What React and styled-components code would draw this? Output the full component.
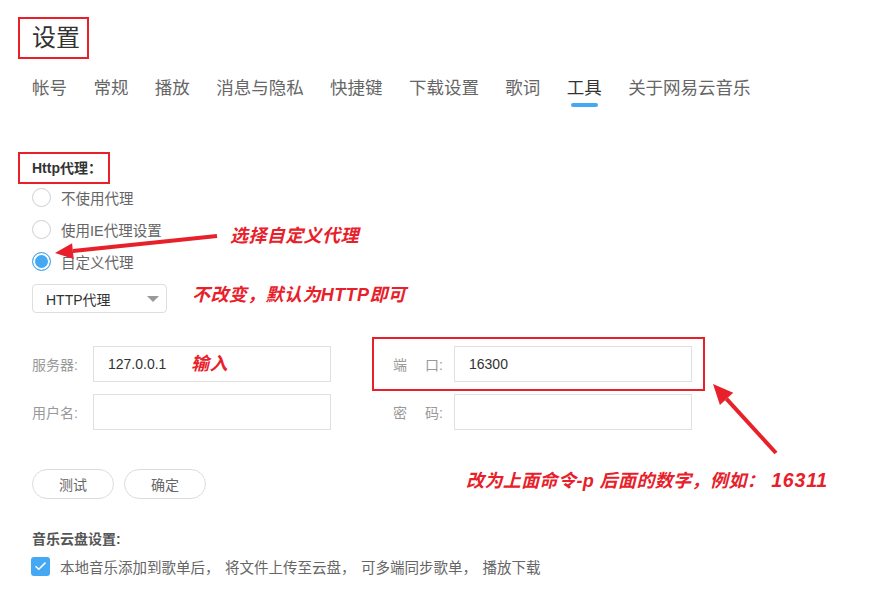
import React from "react";
import styled, { createGlobalStyle } from "styled-components";

const RED = "#e8202a";
const BLUE = "#44a8f2";

const GlobalStyle = createGlobalStyle`
  html, body {
    margin: 0;
    padding: 0;
    background: #fff;
  }
  body {
    font-family: "Liberation Sans", "Noto Sans CJK SC", sans-serif;
  }
`;

const Page = styled.div`
  position: relative;
  width: 889px;
  height: 602px;
  overflow: hidden;
  box-sizing: border-box;
  padding: 17px 0 0 32px;
  background: #fff;
`;

// 红框标注（标题、Http代理）
const Boxed = styled.div`
  box-sizing: border-box;
  width: ${p => p.$w}px;
  height: ${p => p.$h}px;
  margin-left: -14px;
  padding-left: 12px;
  border: 2px solid ${RED};
  color: #333;
  font-size: ${p => p.$size}px;
  font-weight: ${p => (p.$bold ? 700 : 400)};
  line-height: ${p => p.$h - 4}px;
`;

const Tabs = styled.div`
  display: flex;
  gap: 26.4px;
  margin-top: 17px;
`;

const Tab = styled.div`
  position: relative;
  padding-bottom: 7px;
  font-size: 17.5px;
  line-height: 24px;
  color: ${p => (p.$active ? "#333" : "#666")};

  &::after {
    content: "";
    display: ${p => (p.$active ? "block" : "none")};
    position: absolute;
    left: 50%;
    bottom: 0;
    width: 27px;
    height: 4px;
    margin-left: -13.5px;
    border-radius: 2px;
    background: ${BLUE};
  }
`;

const Section = styled.div`
  margin-top: ${p => p.$top}px;
`;

const RadioList = styled.div`
  margin-top: -3px;
`;

const RadioRow = styled.div`
  display: flex;
  align-items: center;
  gap: 10px;
  height: 32px;
  font-size: 14.5px;
  color: #666;
`;

const RadioCircle = styled.span`
  box-sizing: border-box;
  width: 19px;
  height: 19px;
  border-radius: 50%;
  border: 1px solid ${p => (p.$checked ? BLUE : "#cfcfcf")};
  background: ${p => (p.$checked ? BLUE : "#fff")};
  box-shadow: ${p => (p.$checked ? "inset 0 0 0 2px #fff" : "none")};
`;

const Select = styled.div`
  box-sizing: border-box;
  display: flex;
  align-items: center;
  justify-content: space-between;
  width: 135px;
  height: 29px;
  margin-top: 7px;
  padding: 0 7px 0 13px;
  border: 1px solid #dedede;
  border-radius: 4px;
  font-size: 14px;
  color: #333;
`;

const Caret = styled.span`
  width: 0;
  height: 0;
  border-left: 6px solid transparent;
  border-right: 6px solid transparent;
  border-top: 6px solid #999;
`;

const FormGrid = styled.div`
  display: grid;
  grid-template-columns: 299px 299px;
  column-gap: 62px;
  row-gap: 12px;
  margin-top: 33px;
`;

const Field = styled.div`
  position: relative;
  display: flex;
  align-items: center;
  gap: 11px;
`;

const Label = styled.span`
  display: flex;
  justify-content: ${p => (p.$spread ? "space-between" : "flex-start")};
  width: 50px;
  font-size: 14px;
  color: #999;
`;

const Input = styled.input`
  box-sizing: border-box;
  width: 238px;
  height: 36px;
  padding: 0 14px;
  border: 1px solid #e0e0e0;
  outline: none;
  font-family: inherit;
  font-size: 14px;
  color: #333;
  background: #fff;
`;

const Highlight = styled.div`
  position: absolute;
  left: -21px;
  top: -9px;
  width: 333px;
  height: 54px;
  box-sizing: border-box;
  border: 2px solid ${RED};
  pointer-events: none;
`;

const Buttons = styled.div`
  display: flex;
  gap: 10px;
  margin-top: 39px;
`;

const Button = styled.button`
  width: 82px;
  height: 30px;
  border: 1px solid #dcdcdc;
  border-radius: 15px;
  background: #fff;
  font-family: inherit;
  font-size: 14px;
  color: #666;
`;

const SubTitle = styled.div`
  margin-top: 30px;
  font-size: 14px;
  font-weight: 700;
  line-height: 20px;
  color: #555;
`;

const CheckRow = styled.div`
  display: flex;
  align-items: center;
  gap: 10px;
  margin-top: 7px;
  height: 20px;
  font-size: 14.5px;
  color: #666;
`;

const CheckBox = styled.span`
  display: flex;
  align-items: center;
  justify-content: center;
  width: 19px;
  height: 19px;
  margin-left: -1px;
  border-radius: 3px;
  background: ${BLUE};
`;

const Sep = styled.span`
  display: inline-block;
  width: 20px;
`;

// 标注文字
const Note = styled.div`
  position: absolute;
  left: ${p => p.$x}px;
  top: ${p => p.$y}px;
  font-family: "Liberation Sans", "Noto Sans CJK SC", sans-serif;
  font-size: 18px;
  font-weight: 700;
  font-style: italic;
  letter-spacing: 0.4px;
  line-height: 24px;
  color: ${RED};
  white-space: nowrap;
`;

const Num = styled.span`
  margin-left: 6px;
  font-size: 19.5px;
  letter-spacing: 0.8px;
`;

const Arrows = styled.svg`
  position: absolute;
  left: 0;
  top: 0;
  pointer-events: none;
`;

const tabs = ["帐号", "常规", "播放", "消息与隐私", "快捷键", "下载设置", "歌词", "工具", "关于网易云音乐"];
const proxies = ["不使用代理", "使用IE代理设置", "自定义代理"];

const App = () => {
  return (
    <Page>
      <GlobalStyle />
      <Boxed $w={71} $h={42} $size={24}>设置</Boxed>

      <Tabs>
        {tabs.map(t => (
          <Tab key={t} $active={t === "工具"}>{t}</Tab>
        ))}
      </Tabs>

      <Section $top={45}>
        <Boxed $w={92} $h={32} $size={14} $bold>Http代理：</Boxed>
        <RadioList>
          {proxies.map((p, i) => (
            <RadioRow key={p}>
              <RadioCircle $checked={i === 2} />
              {p}
            </RadioRow>
          ))}
        </RadioList>
        <Select>
          HTTP代理
          <Caret />
        </Select>
      </Section>

      <FormGrid>
        <Field>
          <Label>服务器:</Label>
          <Input defaultValue="127.0.0.1" />
        </Field>
        <Field>
          <Highlight />
          <Label $spread><span>端</span><span>口:</span></Label>
          <Input defaultValue="16300" />
        </Field>
        <Field>
          <Label>用户名:</Label>
          <Input />
        </Field>
        <Field>
          <Label $spread><span>密</span><span>码:</span></Label>
          <Input type="password" />
        </Field>
      </FormGrid>

      <Buttons>
        <Button>测试</Button>
        <Button>确定</Button>
      </Buttons>

      <SubTitle>音乐云盘设置:</SubTitle>
      <CheckRow>
        <CheckBox>
          <svg width="13" height="10" viewBox="0 0 13 10">
            <path d="M1.5 5.2 L4.8 8.3 L11.5 1.6" fill="none" stroke="#fff" strokeWidth="1.5" />
          </svg>
        </CheckBox>
        <span>
          本地音乐添加到歌单后<Sep>，</Sep>将文件上传至云盘<Sep>，</Sep>可多端同步歌单<Sep>，</Sep>播放下载
        </span>
      </CheckRow>

      <Note $x={230} $y={224}>选择自定义代理</Note>
      <Note $x={192} $y={283}>不改变，默认为HTTP即可</Note>
      <Note $x={191} $y={352}>输入</Note>
      <Note $x={466} $y={468}>改为上面命令-p 后面的数字，例如：<Num>16311</Num></Note>

      <Arrows width="889" height="602" viewBox="0 0 889 602">
        <line x1="217" y1="236" x2="72.9" y2="251.1" stroke={RED} strokeWidth="4" />
        <polygon points="55,253 73.7,259.1 72.1,243.2" fill={RED} />
        <line x1="776" y1="453" x2="726.5" y2="398.8" stroke={RED} strokeWidth="4" />
        <polygon points="713,384 733.2,392.7 719.9,404.9" fill={RED} />
      </Arrows>
    </Page>
  );
};

export default App;
